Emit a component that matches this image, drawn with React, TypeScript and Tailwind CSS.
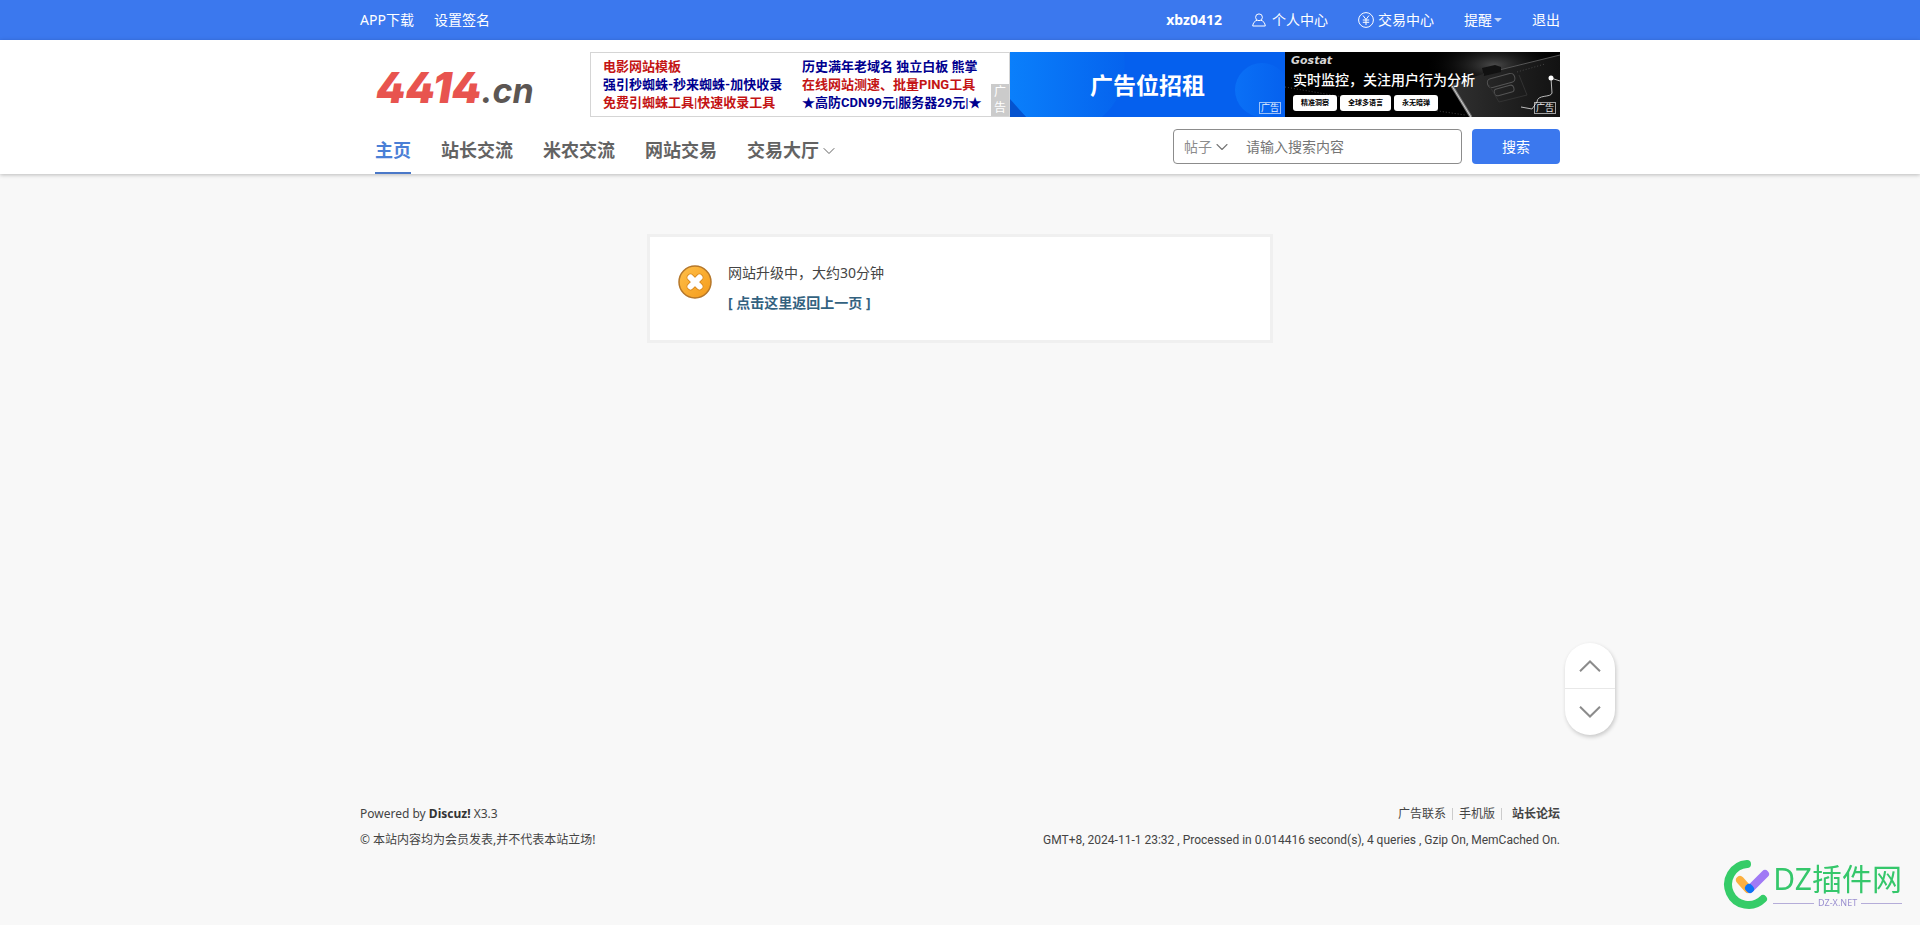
import { ChevronDown } from "lucide-react";

const navItems = ["主页", "站长交流", "米农交流", "网站交易", "交易大厅"];

const textAds = [
  { label: "电影网站模板", color: "text-[#c41414]" },
  { label: "历史满年老域名 独立白板 熊掌", color: "text-[#00008f]" },
  { label: "强引秒蜘蛛-秒来蜘蛛-加快收录", color: "text-[#00008f]" },
  { label: "在线网站测速、批量PING工具", color: "text-[#c41414]" },
  { label: "免费引蜘蛛工具|快速收录工具", color: "text-[#c41414]" },
  { label: "★高防CDN99元|服务器29元|★", color: "text-[#00008f]" },
];

const UserIcon = () => (
  <svg width="14" height="14" viewBox="0 0 14 14" fill="none" stroke="currentColor">
    <circle cx="7" cy="4.3" r="3.4" />
    <path d="M5 7.3C2.6 8 1 10 .7 13h12.6C13 10 11.4 8 9 7.3" strokeLinejoin="round" />
  </svg>
);

const YenIcon = () => (
  <svg width="16" height="16" viewBox="0 0 16 16" fill="none" stroke="currentColor">
    <circle cx="8" cy="8" r="7.4" />
    <path d="M5 3.5l3 4 3-4M8 7.5v5.5M4.8 8h6.4M4.8 10.3h6.4" />
  </svg>
);

const TopBar = () => (
  <div className="bg-[#3b78ee] text-sm text-white">
    <div className="mx-auto flex h-10 max-w-[1200px] items-center justify-between">
      <div className="flex gap-5">
        <a href="#">APP下载</a>
        <a href="#">设置签名</a>
      </div>
      <div className="flex items-center gap-[30px]">
        <a href="#" className="font-bold">
          xbz0412
        </a>
        <a href="#" className="flex items-center gap-1.5">
          <UserIcon />
          个人中心
        </a>
        <a href="#" className="flex items-center gap-1">
          <YenIcon />
          交易中心
        </a>
        <a href="#" className="flex items-center gap-0.5">
          提醒
          <svg width="8" height="4" viewBox="0 0 8 4" fill="#c5d7fa">
            <path d="M0 0h8L4 4z" />
          </svg>
        </a>
        <a href="#">退出</a>
      </div>
    </div>
  </div>
);

const Logo = () => (
  <a
    href="#"
    className="flex w-[230px] items-baseline pl-4 font-['Inter',sans-serif] font-black italic leading-none"
  >
    <span className="text-[42px] text-[#e8544f] [font-feature-settings:'cv02','ss01']">4414</span>
    <span className="text-[34px] font-bold text-[#5c5653]">.cn</span>
  </a>
);

const TextAd = () => (
  <div className="relative grid w-[420px] grid-cols-[199px_1fr] content-center border border-[#d5d5d5] bg-white pl-3 font-['Roboto','Noto_Sans_CJK_SC',sans-serif] text-[13px] font-bold leading-[18px]">
    {textAds.map((ad) => (
      <a key={ad.label} href="#" className={`whitespace-nowrap ${ad.color}`}>
        {ad.label}
      </a>
    ))}
    <span className="absolute bottom-0 right-0 w-[18px] bg-[#cbcbcb] px-[3px] text-xs font-normal leading-4 text-white">
      广告
    </span>
  </div>
);

const AdMark = () => (
  <span className="absolute bottom-[3px] right-1 border border-white/60 px-px text-[9px] leading-[10px] text-white/90">
    广告
  </span>
);

const BlueAd = () => (
  <a
    href="#"
    className="relative flex w-[275px] items-center justify-center overflow-hidden bg-[#0560ee] pt-0.5"
  >
    <svg className="absolute inset-0" width="275" height="65" viewBox="0 0 275 65">
      <defs>
        <linearGradient id="wave">
          <stop offset="0" stopColor="#0a7ffb" />
          <stop offset="1" stopColor="#0563ee" />
        </linearGradient>
        <linearGradient id="bubble">
          <stop offset="0" stopColor="#0a70f6" />
          <stop offset="1" stopColor="#0560ee" />
        </linearGradient>
      </defs>
      <path d="M0 0H114C117 28 110 50 92 65H16L0 50Z" fill="url(#wave)" />
      <path d="M0 47L16 65H0Z" fill="#0553cf" />
      <circle cx="252" cy="38" r="27" fill="url(#bubble)" />
    </svg>
    <span className="relative text-[23px] font-bold text-white">广告位招租</span>
    <AdMark />
  </a>
);

const GostatAd = () => (
  <a href="#" className="relative block w-[275px] overflow-hidden bg-black text-white">
    <svg className="absolute inset-0" width="275" height="65" viewBox="0 0 275 65" fill="none">
      <defs>
        <radialGradient id="glow" cx="0.6" cy="0.2" r="0.4">
          <stop offset="0" stopColor="#4a4a4a" />
          <stop offset="1" stopColor="#0c0c0c" stopOpacity="0" />
        </radialGradient>
        <linearGradient id="pad" x1="0" x2="1">
          <stop offset="0" stopColor="#303030" />
          <stop offset="1" stopColor="#121212" />
        </linearGradient>
      </defs>
      <path d="M110 0H275V65H110Z" fill="url(#glow)" />
      <path d="M166 32L198 22L275 3V65H186Z" fill="url(#pad)" />
      <path d="M167 34L186 65" stroke="#777" strokeWidth="3" />
      <path d="M167 34L186 65" stroke="#ccc" />
      <path d="M198 22L275 3" stroke="#555" />
      <path d="M197 16l13-3 6 2v5l-17 4z" fill="#111" />
      <g stroke="#555">
        <rect x="202" y="24" width="28" height="9" rx="4" transform="rotate(-15 216 28)" />
        <rect x="209" y="35" width="20" height="7" rx="3" transform="rotate(-15 219 38)" />
        <path d="M204 33l10 17 28-7-8-20" stroke="#333" />
      </g>
      <path d="M232 20l28-8M0 35l70 12M140 57l40 6" stroke="#444" strokeDasharray="1 2" />
      <path d="M275 29L266 26L267 41C266 46 252 42 252 50L247 57L236 55" stroke="#bbb" />
      <circle cx="266" cy="26" r="2.5" fill="#fff" />
    </svg>
    <div className="relative flex flex-col items-start pl-2">
      <span className="-ml-0.5 h-[19px] font-['DejaVu_Sans',sans-serif] text-[11px] font-bold italic leading-[18px] text-[#d5d5d5]">
        Gostat
      </span>
      <span className="whitespace-nowrap text-sm font-medium leading-[18px]">
        实时监控，关注用户行为分析
      </span>
      <span className="mt-1.5 flex gap-[3px] text-[7px] font-bold leading-4 text-black">
        <span className="rounded-[3px] bg-white px-2">精准洞察</span>
        <span className="rounded-[3px] bg-white px-2">全球多语言</span>
        <span className="rounded-[3px] bg-white px-2">永无暗弹</span>
      </span>
    </div>
    <AdMark />
  </a>
);

const SearchForm = () => (
  <form className="flex gap-2.5" onSubmit={(e) => e.preventDefault()}>
    <div className="flex h-[35px] w-[289px] items-center rounded border border-[#8c8c8c] bg-white text-[#757575]">
      <div className="relative flex items-center">
        <select
          aria-label="搜索类型"
          className="w-[60px] appearance-none bg-transparent pl-2.5 text-sm text-[#8c8c8c] outline-none"
        >
          <option>帖子</option>
        </select>
        <ChevronDown
          className="pointer-events-none absolute right-0.5 size-5"
          strokeWidth={1.3}
        />
      </div>
      <input
        type="text"
        aria-label="搜索内容"
        placeholder="请输入搜索内容"
        className="min-w-0 flex-1 bg-transparent pl-3 text-sm outline-none placeholder:text-[#757575]"
      />
    </div>
    <button type="submit" className="h-[35px] w-[88px] rounded bg-[#3b78ee] text-sm text-white">
      搜索
    </button>
  </form>
);

const Header = () => (
  <header className="bg-white shadow-[0_1px_4px_rgba(0,0,0,0.25)]">
    <div className="mx-auto max-w-[1200px] pt-3">
      <div className="flex h-[65px]">
        <div className="flex items-center pt-1.5">
          <Logo />
        </div>
        <TextAd />
        <BlueAd />
        <GostatAd />
      </div>
      <div className="flex items-start justify-between pt-3">
        <nav className="flex gap-[30px] pl-[15px] text-lg font-bold leading-[43px] text-[#636363]">
          {navItems.map((item, i) => (
            <a
              key={item}
              href="#"
              className={
                i === 0
                  ? "border-b-2 border-[#4a78c8] text-[#4a7fd6]"
                  : "flex items-center border-b-2 border-transparent"
              }
            >
              {item}
              {i === navItems.length - 1 && <ChevronDown className="size-5" strokeWidth={1.2} />}
            </a>
          ))}
        </nav>
        <SearchForm />
      </div>
    </div>
  </header>
);

const MessageBox = () => (
  <main className="mx-auto mt-[60px] flex h-[109px] w-full max-w-[626px] gap-4 border-[3px] border-[#f0f0f0] bg-white pl-7 pt-6">
    <svg className="mt-1 shrink-0" width="34" height="34" viewBox="0 0 34 34" strokeLinecap="round">
      <defs>
        <linearGradient id="orange" x1="0" y1="0" x2="1" y2="1">
          <stop offset="0" stopColor="#ffc04a" />
          <stop offset="1" stopColor="#f49a1a" />
        </linearGradient>
      </defs>
      <circle cx="17" cy="17" r="16" fill="url(#orange)" stroke="#b5772a" strokeWidth="1.5" />
      <path d="M12.5 12.5l9 9M21.5 12.5l-9 9" stroke="#d98a20" strokeWidth="7.5" />
      <path d="M12.5 12.5l9 9M21.5 12.5l-9 9" stroke="#fff" strokeWidth="6" />
    </svg>
    <div className="text-sm text-[#444]">
      <p className="leading-6">网站升级中，大约30分钟</p>
      <p className="mt-1.5 leading-6">
        <a href="#" className="font-bold text-[#33627f]">
          [ 点击这里返回上一页 ]
        </a>
      </p>
    </div>
  </main>
);

const ScrollButtons = () => (
  <div className="fixed bottom-[190px] left-1/2 ml-[605px] flex w-[50px] flex-col overflow-hidden rounded-full bg-white shadow-[1px_2px_4px_rgba(0,0,0,0.2)]">
    <button
      type="button"
      aria-label="返回顶部"
      className="flex h-[46px] items-center justify-center border-b border-[#e8e8e8]"
    >
      <svg width="22" height="12" viewBox="0 0 22 12" fill="none" stroke="#8c8c8c" strokeWidth="2">
        <path d="M1 11.3L11 1.5L21 11.3" />
      </svg>
    </button>
    <button type="button" aria-label="到底部" className="flex h-[46px] items-center justify-center">
      <svg width="22" height="12" viewBox="0 0 22 12" fill="none" stroke="#8c8c8c" strokeWidth="2">
        <path d="M1 .7L11 10.5L21 .7" />
      </svg>
    </button>
  </div>
);

const Footer = () => (
  <footer className="mx-auto mt-auto flex w-full max-w-[1200px] justify-between pb-[72px] text-xs leading-[26px] text-[#444]">
    <div>
      <p>
        Powered by{" "}
        <a href="#" className="font-bold text-[#333]">
          Discuz!
        </a>{" "}
        X3.3
      </p>
      <p>© 本站内容均为会员发表,并不代表本站立场!</p>
    </div>
    <div className="text-right">
      <p className="flex items-center justify-end">
        <a href="#">广告联系</a>
        <span className="mx-1.5 h-3 w-px bg-[#ccc]" />
        <a href="#">手机版</a>
        <span className="ml-1.5 mr-2.5 h-3 w-px bg-[#ccc]" />
        <a href="#" className="font-bold">
          站长论坛
        </a>
      </p>
      <p className="font-['Roboto',sans-serif]">
        GMT+8, 2024-11-1 23:32 , Processed in 0.014416 second(s), 4 queries , Gzip On, MemCached On.
      </p>
    </div>
  </footer>
);

const SiteBadge = () => (
  <a href="#" className="fixed bottom-[14px] right-[18px] flex items-center gap-[3px]">
    <svg width="48" height="52" viewBox="0 0 48 52" fill="none" strokeLinecap="round">
      <path d="M25 5A20.5 20.5 0 1 0 41 40" stroke="#35cc68" strokeWidth="8" />
      <path d="M18 21L26 30" stroke="#fbb040" strokeWidth="8" />
      <path d="M43 15L28 30" stroke="#a07af5" strokeWidth="8" />
      <path d="M27 29L28 30" stroke="#0b74f5" strokeWidth="8" />
    </svg>
    <span className="flex flex-col">
      <span className="text-[30px] leading-9 text-[#35c76b]">DZ插件网</span>
      <span className="flex items-center gap-1 text-[9px] leading-3 text-[#9a8fd0]">
        <span className="h-px flex-1 bg-[#b5add9]" />
        DZ-X.NET
        <span className="h-px flex-1 bg-[#b5add9]" />
      </span>
    </span>
  </a>
);

const App = () => (
  <div className="flex min-h-screen flex-col bg-[#f8f8f8] font-['Noto_Sans','Noto_Sans_CJK_SC',sans-serif]">
    <TopBar />
    <Header />
    <MessageBox />
    <ScrollButtons />
    <Footer />
    <SiteBadge />
  </div>
);

export default App;
